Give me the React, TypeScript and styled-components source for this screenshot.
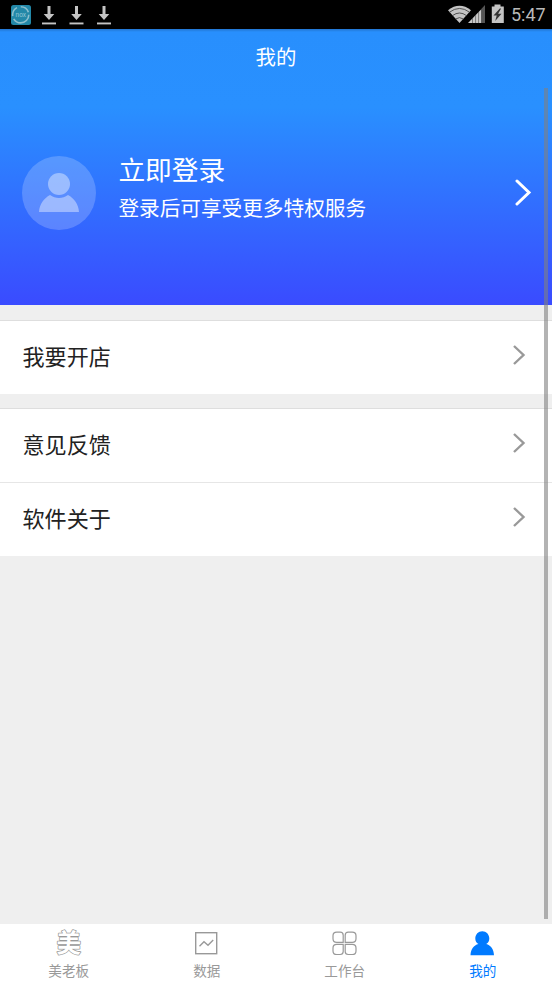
import React from "react";
import styled, { createGlobalStyle } from "styled-components";

const GlobalStyle = createGlobalStyle`
  * { box-sizing: border-box; }
  body { margin: 0; background: #efefef; }
`;

const Screen = styled.div`
  position: relative;
  display: flex;
  flex-direction: column;
  width: 552px;
  height: 982px;
  overflow: hidden;
  background: #efefef;
  font-family: "Noto Sans CJK SC", sans-serif;
`;

const StatusBar = styled.div`
  display: flex;
  flex: none;
  justify-content: space-between;
  height: 29px;
  background: #000;
`;

const StatusGroup = styled.div`
  display: flex;
`;

const Clock = styled.span`
  width: 41px;
  font: 18px/30px Roboto, sans-serif;
  color: #b9b9b9;
  white-space: nowrap;
`;

const Header = styled.header`
  flex: none;
  height: 276px;
  background: linear-gradient(to bottom, #2275d0 0, #288ffd 3px, #2990ff 78px, #3a4bff 276px);
`;

const Title = styled.h1`
  margin: 0;
  height: 55px;
  font-size: 20.4px;
  font-weight: 400;
  line-height: 54px;
  text-align: center;
  color: #fff;
`;

const Profile = styled.div`
  display: flex;
  align-items: center;
  height: 218px;
  padding: 0 20px 0 22px;
`;

const Avatar = styled.svg`
  flex: none;
  width: 74px;
  height: 74px;
`;

const ProfileText = styled.div`
  flex: 1;
  padding-left: 22.4px;
  margin-top: -12px;
  color: #fff;
`;

const LoginTitle = styled.div`
  font-size: 26.7px;
  line-height: 40px;
`;

const LoginHint = styled.div`
  font-size: 20.65px;
  line-height: 36px;
`;

const ProfileArrow = styled.svg`
  flex: none;
  margin-top: -2px;
`;

const Group = styled.section`
  flex: none;
  margin-top: 15px;
  & + & { margin-top: 14px; }
`;

const Row = styled.div<{ $height: number }>`
  display: flex;
  align-items: center;
  justify-content: space-between;
  height: ${(p) => p.$height}px;
  padding: 0 26px 5px 22.5px;
  border-top: 1px solid #dedede;
  background: #fff;
  font-size: 22.1px;
  line-height: 32px;
  color: #222;
  & + & { border-top-color: #e6e6e6; }
`;

const Chevron = styled.svg`
  display: block;
`;

const Spacer = styled.div`
  flex: 1;
`;

const TabBar = styled.nav`
  display: grid;
  flex: none;
  grid-template-columns: repeat(4, 1fr);
  height: 58px;
  background: #fff;
`;

const Tab = styled.div<{ $active?: boolean }>`
  display: flex;
  flex-direction: column;
  align-items: center;
  padding-top: 5px;
  font-size: 13.6px;
  line-height: 20px;
  color: ${(p) => (p.$active ? "#007aff" : "#999")};
`;

const TabLabel = styled.span`
  margin-left: -0.5px;
`;

const TabIcon = styled.svg`
  flex: none;
  width: 28px;
  height: 28px;
  margin: 0 2px 3px 0;
  overflow: visible;
`;

const Scrollbar = styled.div`
  position: absolute;
  top: 88px;
  left: 544px;
  width: 4px;
  height: 831px;
  background: rgba(128, 128, 128, 0.6);
`;

const Arrow = () => (
  <Chevron width="14" height="22" viewBox="0 0 14 22">
    <path d="M2 2 11.500 11 2 20" fill="none" stroke="#999" strokeWidth="2.400" />
  </Chevron>
);

const LeftStatusIcons = () => (
  <svg width="120" height="29" viewBox="0 0 120 29">
    <rect x="11" y="5" width="20" height="20" rx="2.5" fill="#2388a8" />
    <circle cx="20.7" cy="14.8" r="8.1" fill="none" stroke="#8dbfce" strokeWidth="1.6" strokeDasharray="21 3 10 4 10 3" />
    <text x="20.8" y="17" textAnchor="middle" fontFamily="Roboto, sans-serif" fontSize="6.5" fill="#91c5d5">nox</text>
    {[49, 76.5, 104].map((x) => (
      <g key={x} fill="#c4c4c4" transform={`translate(${x} 0)`}>
        <path d="M-1.5 6h3v8h3.8L0 20l-5.3-6h3.8z" />
        <rect x="-7" y="22.5" width="14" height="1.9" />
      </g>
    ))}
  </svg>
);

const RightStatusIcons = () => (
  <svg width="63" height="29" viewBox="448 0 63 29">
    <path d="M448 10.2Q459.5 1.3 471 10.2L459.5 23z" fill="#c4c4c4" />
    <g fill="none" stroke="#444" strokeWidth=".9">
      <path d="M449.5 12.2q10-7.5 20 0M452.5 15.6q7-5.2 14 0M455.6 19q3.9-2.8 7.8 0" />
    </g>
    <path d="M468 23 481.500 9V23z" fill="#c8c8c8" />
    <path d="M481.5 8.800 485 5v18h-3.500z" fill="#555" />
    <path d="M472.500 18v5M475.600 15v8M478.600 12v11" stroke="#444" strokeWidth=".6" />
    <path d="M494.5 4.5h6v2h3.3V23h-12V6.5h2.7z" fill="#c4c4c4" />
    <path d="m499.8 8.5-6.300 7h3.200l-1.500 5.500 6.300-7.300h-3.400l3-5.200z" fill="#333" />
  </svg>
);

const App = () => (
  <>
    <GlobalStyle />
    <Screen>
      <StatusBar>
        <LeftStatusIcons />
        <StatusGroup>
          <RightStatusIcons />
          <Clock>5:47</Clock>
        </StatusGroup>
      </StatusBar>
      <Header>
        <Title>我的</Title>
        <Profile>
          <Avatar viewBox="0 0 74 74">
            <circle cx="37" cy="37" r="37" fill="#fff" fillOpacity=".2" />
            <g fill="#fff" fillOpacity=".4">
              <circle cx="37" cy="28" r="11" />
              <path d="M17 56c.4-8 5-13.7 11-17 5.5 4 12.500 4 18 0 6 3.300 10.600 9 11 17z" />
            </g>
          </Avatar>
          <ProfileText>
            <LoginTitle>立即登录</LoginTitle>
            <LoginHint>登录后可享受更多特权服务</LoginHint>
          </ProfileText>
          <ProfileArrow width="18" height="28" viewBox="0 0 18 28">
            <path d="M3 3 15 14.500 3 26" fill="none" stroke="#fff" strokeWidth="3" strokeLinecap="round" />
          </ProfileArrow>
        </Profile>
      </Header>
      <Group>
        <Row $height={73.5}>我要开店<Arrow /></Row>
      </Group>
      <Group>
        <Row $height={74}>意见反馈<Arrow /></Row>
        <Row $height={74}>软件关于<Arrow /></Row>
      </Group>
      <Spacer />
      <TabBar>
        <Tab>
          <TabIcon viewBox="0 0 28 28">
            <text x="14.700" y="23.200" textAnchor="middle" fontFamily="Noto Sans CJK SC, sans-serif" fontSize="24.500" fontWeight="700" fill="#fff" stroke="#999" strokeWidth="1.500" strokeLinejoin="round" paintOrder="stroke">美</text>
          </TabIcon>
          <TabLabel>美老板</TabLabel>
        </Tab>
        <Tab>
          <TabIcon viewBox="0 0 28 28" fill="none" stroke="#999">
            <rect x="3.700" y="3.700" width="21" height="21" strokeWidth="1.400" />
            <path d="m7.500 17.200 4.500-4.500 4 3.500 5.200-5.300" strokeWidth="1.400" />
          </TabIcon>
          <TabLabel>数据</TabLabel>
        </Tab>
        <Tab>
          <TabIcon viewBox="0 0 28 28" fill="none" stroke="#999" strokeWidth="1.200">
            <path d="M6.800 3.200h3.400q3 0 3 3v7.100H6.800q-3.800 0-3.800-3.600V6.800q0-3.600 3.800-3.600z" />
            <path d="M18.200 3.200h4q3.800 0 3.800 3.600v2.900q0 3.600-3.800 3.600h-7V6.200q0-3 3-3z" />
            <path d="M6.800 15.300h6.400v7.200q0 3-3 3H6.800Q3 25.500 3 21.900v-3q0-3.600 3.800-3.600z" />
            <path d="M15.200 15.300h7q3.800 0 3.800 3.600v3q0 3.600-3.800 3.600h-4q-3 0-3-3z" />
          </TabIcon>
          <TabLabel>工作台</TabLabel>
        </Tab>
        <Tab $active>
          <TabIcon viewBox="0 0 28 28" fill="#007aff">
            <path d="M10.400 15C8.300 13.700 7.300 11.700 7.300 9.400c0-4 3-7.200 7-7.200s7 3.200 7 7.200c0 2.300-1 4.300-3.100 5.600 4.600 1.300 7.500 5 7.800 11.300H2.500C2.800 20 5.800 16.300 10.400 15z" />
          </TabIcon>
          <TabLabel>我的</TabLabel>
        </Tab>
      </TabBar>
      <Scrollbar />
    </Screen>
  </>
);

export default App;
